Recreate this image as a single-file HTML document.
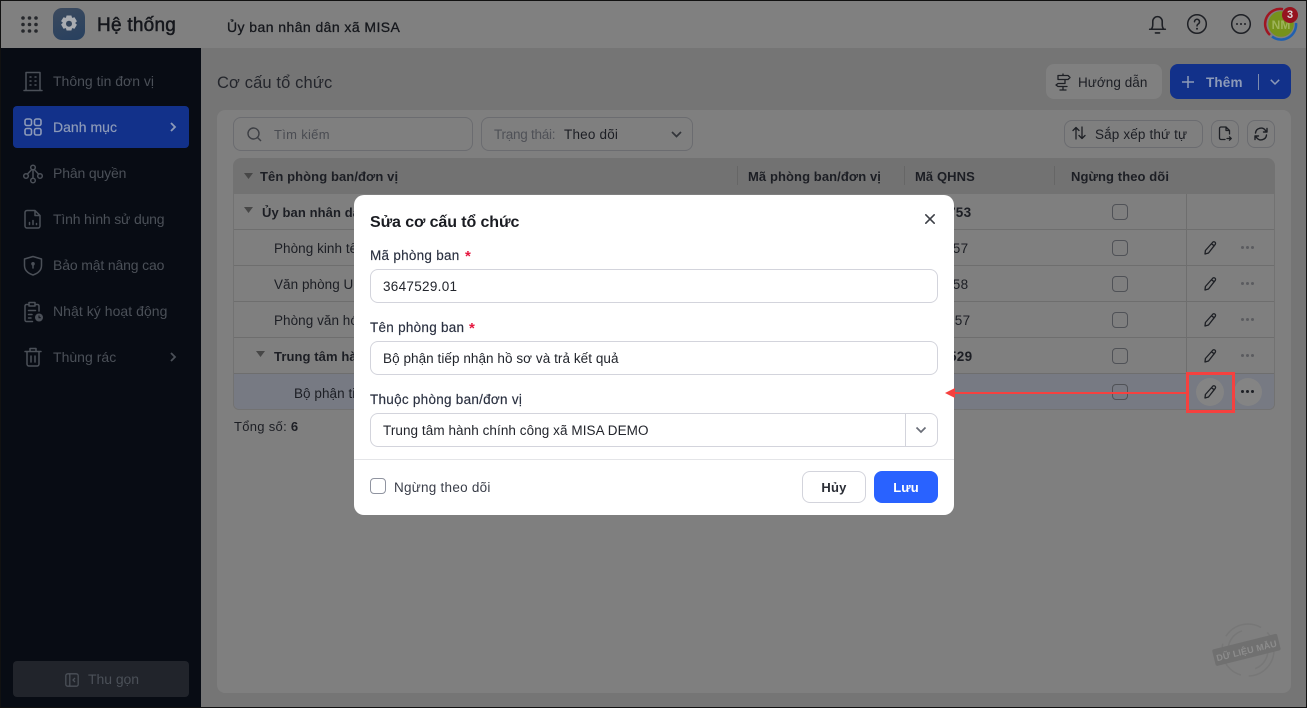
<!DOCTYPE html>
<html><head><meta charset="utf-8"><style>
*{box-sizing:border-box}
html,body{margin:0;padding:0}
body{width:1307px;height:708px;overflow:hidden;position:relative;background:#757575;font-family:"Liberation Sans","Noto Sans CJK SC",sans-serif;color:#1c1e24}
.a{position:absolute}
.t{position:absolute;white-space:nowrap;font-size:13.5px;line-height:18px;letter-spacing:.25px;transform:translateY(1px)}
.b{font-weight:700}
.side{color:#4b5058;font-size:14px;letter-spacing:0;transform:translateY(-1px)}
.box{position:absolute;border:1px solid #6b6c70;border-radius:8px}
.line{position:absolute;background:#6e6e6e}
.cb{position:absolute;width:16px;height:16px;border:1.5px solid #505257;border-radius:4px}
svg{position:absolute;overflow:visible}
.dark{fill:none;stroke:#1e2025;stroke-width:1.5;stroke-linecap:round;stroke-linejoin:round}
.sic{fill:none;stroke:#4b5058;stroke-width:1.5;stroke-linecap:round;stroke-linejoin:round}
.inp{position:absolute;left:16px;width:568px;height:34px;border:1px solid #d3d4dc;border-radius:8px;background:#fff}
.lab{position:absolute;left:16px;white-space:nowrap;font-size:13.5px;line-height:18px;letter-spacing:.27px;color:#2a3040;transform:translateY(1px);-webkit-text-stroke:.15px #2a3040}
.val{position:absolute;left:29px;white-space:nowrap;font-size:13.5px;line-height:18px;letter-spacing:.06px;color:#22252c;transform:translateY(1px)}
.th{font-size:13px;letter-spacing:.09px}
.dots i{position:absolute;top:0;width:3px;height:3px;border-radius:50%;background:#5b5c60}
</style></head><body>

<!-- header -->
<div class="a" style="left:0;top:0;width:1307px;height:48px;background:#808080"></div>
<svg style="left:21px;top:16px" width="17" height="17" fill="#26282c"><circle cx="2" cy="2" r="1.8"/><circle cx="8.5" cy="2" r="1.8"/><circle cx="15" cy="2" r="1.8"/><circle cx="2" cy="8.5" r="1.8"/><circle cx="8.5" cy="8.5" r="1.8"/><circle cx="15" cy="8.5" r="1.8"/><circle cx="2" cy="15" r="1.8"/><circle cx="8.5" cy="15" r="1.8"/><circle cx="15" cy="15" r="1.8"/></svg>
<div class="a" style="left:53px;top:8px;width:32px;height:32px;border-radius:9px;background:linear-gradient(160deg,#3c4a5e,#27405f)"></div>
<svg style="left:59px;top:14px" width="20" height="20" viewBox="0 0 20 20"><path d="M7.6 1.5h4.8l.7 2.4 2.4-.7 2.4 4.1-1.8 1.7 1.8 1.7-2.4 4.1-2.4-.7-.7 2.4H7.6l-.7-2.4-2.4.7L2.1 10.5 3.9 8.8 2.1 7.1l2.4-3.9 2.4.7z" fill="#a9acb1"/><circle cx="10" cy="9.8" r="3" fill="#33445a"/></svg>
<div class="t" style="left:97px;top:12px;font-size:19px;line-height:25px;letter-spacing:.25px;color:#15171c;-webkit-text-stroke:.5px #15171c">Hệ thống</div>
<div class="t" style="left:227px;top:17px;font-size:14px;letter-spacing:.43px;color:#15171c;-webkit-text-stroke:.3px #15171c">Ủy ban nhân dân xã MISA</div>

<svg style="left:1147px;top:14px" width="21" height="21" viewBox="0 0 20 20"><path class="dark" d="M4 14.5c1.2-1.2 1.5-2.2 1.5-4.5V7a4.500 4.500 0 0 1 9 0v3c0 2.300.3 3.300 1.500 4.500zM2.500 14.500h15M8 18h4"/></svg>
<svg style="left:1187px;top:14px" width="20" height="20" viewBox="0 0 20 20"><circle class="dark" cx="10" cy="10" r="9.300"/><path class="dark" d="M7.500 7.800a2.500 2.500 0 1 1 3.800 2.100c-.9.600-1.300 1-1.300 2"/><circle cx="10" cy="14.800" r="1" fill="#1e2025"/></svg>
<svg style="left:1231px;top:14px" width="20" height="20" viewBox="0 0 20 20"><circle class="dark" cx="10" cy="10" r="9.300"/><circle cx="6" cy="10" r="1" fill="#1e2025"/><circle cx="10" cy="10" r="1" fill="#1e2025"/><circle cx="14" cy="10" r="1" fill="#1e2025"/></svg>
<svg style="left:1265px;top:8px" width="32" height="32" viewBox="0 0 32 32"><circle cx="16" cy="16" r="12.800" fill="#76921c"/><path d="M5 27A15 15 0 0 1 18 1.200" fill="none" stroke="#a01622" stroke-width="2.500"/><path d="M7 28.500A15 15 0 0 0 31 15" fill="none" stroke="#2060b0" stroke-width="2.500"/><text x="16" y="21" text-anchor="middle" font-family="Liberation Sans" font-weight="700" font-size="12" fill="#9eb35a">NM</text></svg>
<div class="a" style="left:1282px;top:7px;width:16px;height:16px;border-radius:50%;background:#96141f;color:#d9d9d9;font-size:11px;font-weight:700;line-height:16px;text-align:center">3</div>

<!-- sidebar -->
<div class="a" style="left:0;top:48px;width:201px;height:660px;background:#080c14"></div>
<div class="a" style="left:13px;top:106px;width:176px;height:42px;border-radius:4px;background:#12318a"></div>

<svg style="left:23px;top:71px" width="20" height="20" viewBox="0 0 20 20"><path class="sic" d="M3 19V1.500h14V19M1 19.500h18M7 6h1M12 6h1M7 10h1M12 10h1M7 14h1M12 14h1"/></svg>
<div class="t side" style="left:53px;top:73px">Thông tin đơn vị</div>

<svg style="left:24px;top:118px" width="18" height="18" viewBox="0 0 18 18" fill="none" stroke="#8d9ab8" stroke-width="1.600"><rect x="1" y="1" width="6.500" height="6.500" rx="1.800"/><rect x="10.500" y="1" width="6.500" height="6.500" rx="1.800"/><rect x="1" y="10.500" width="6.500" height="6.500" rx="1.800"/><rect x="10.500" y="10.500" width="6.500" height="6.500" rx="1.800"/></svg>
<div class="t side" style="left:53px;top:119px;color:#8d9ab8;letter-spacing:.02px;-webkit-text-stroke:.2px #8d9ab8">Danh mục</div>
<svg style="left:169px;top:122px" width="8" height="10" viewBox="0 0 8 10"><path d="M2 1l4 4-4 4" fill="none" stroke="#8d9ab8" stroke-width="1.800"/></svg>

<svg style="left:23px;top:164px" width="20" height="20" viewBox="0 0 20 20"><circle class="sic" cx="10" cy="3.500" r="2.300"/><circle class="sic" cx="3" cy="12" r="2.300"/><circle class="sic" cx="17" cy="12" r="2.300"/><circle class="sic" cx="10" cy="16.500" r="2.300"/><path class="sic" d="M8.800 5.500L4.500 10M11.200 5.500L15.500 10M10 6v8"/></svg>
<div class="t side" style="left:53px;top:165px;letter-spacing:-.15px">Phân quyền</div>

<svg style="left:24px;top:209px" width="18" height="20" viewBox="0 0 18 20"><path class="sic" d="M3 1.500h8l5 5V17a2 2 0 0 1-2 2H3a2 2 0 0 1-2-2V3.500a2 2 0 0 1 2-2zM11 1.500V6.500h5M5.500 15.500v-2M9 15.500v-4M12.500 15.500v-1"/></svg>
<div class="t side" style="left:53px;top:211px;letter-spacing:-.18px">Tình hình sử dụng</div>

<svg style="left:23px;top:255px" width="20" height="21" viewBox="0 0 20 21"><path class="sic" d="M10 1.500l8.500 2.500v6.500c0 4.500-3.500 7.800-8.500 9.500-5-1.700-8.500-5-8.500-9.500V4z"/><circle cx="10" cy="8.800" r="1.800" fill="#4b5058"/><path class="sic" d="M10 10v3"/></svg>
<div class="t side" style="left:53px;top:257px;letter-spacing:-.15px">Bảo mật nâng cao</div>

<svg style="left:24px;top:301px" width="20" height="22" viewBox="0 0 20 22"><path class="sic" d="M4 3.500H2.500a1.500 1.500 0 0 0-1.500 1.500v14a1.500 1.500 0 0 0 1.500 1.500h6M12 3.500h1.500A1.500 1.500 0 0 1 15 5v5M5 1.500h6v3.500H5zM4.500 9.500h7M4.500 13.500h3.500M4.500 17h2.500"/><circle cx="15" cy="16.500" r="4" fill="#4b5058"/><path d="M15 14.500v2.200h1.800" fill="none" stroke="#080c14" stroke-width="1"/></svg>
<div class="t side" style="left:53px;top:303px;letter-spacing:.05px">Nhật ký hoạt động</div>

<svg style="left:24px;top:347px" width="18" height="20" viewBox="0 0 18 20"><path class="sic" d="M1 4.500h16M3 4.500V17a2 2 0 0 0 2 2h8a2 2 0 0 0 2-2V4.500M6 4.500V1.500h6v3M7 9v6M11 9v6"/></svg>
<div class="t side" style="left:53px;top:349px;letter-spacing:.02px">Thùng rác</div>
<svg style="left:169px;top:352px" width="8" height="10" viewBox="0 0 8 10"><path d="M2 1l4 4-4 4" fill="none" stroke="#4b5058" stroke-width="1.800"/></svg>

<div class="a" style="left:13px;top:661px;width:176px;height:36px;border-radius:4px;background:#21242b"></div>
<svg style="left:65px;top:673px" width="14" height="14" viewBox="0 0 14 14" fill="none" stroke="#4b5058" stroke-width="1.300"><rect x=".8" y=".8" width="12.400" height="12.400" rx="2"/><path d="M4.800 1v12M10 5L8 7l2 2"/></svg>
<div class="t side" style="left:88px;top:671px;letter-spacing:-.05px">Thu gọn</div>

<!-- content -->
<div class="t" style="left:217px;top:72px;font-size:16.500px;line-height:21px;letter-spacing:.13px;color:#24262c">Cơ cấu tổ chức</div>

<div class="a" style="left:1046px;top:64px;width:116px;height:35px;border-radius:8px;background:#808080"></div>
<svg style="left:1055px;top:73px" width="16" height="18" viewBox="0 0 16 18"><path class="dark" style="stroke-width:1.300" d="M3 2.500h10l2 2-2 2H3zM10 7v3.500H3l-2 1.500 2 1.500h9M8 1v1.500M8 13.500V17M5 17h6"/></svg>
<div class="t" style="left:1078px;top:73px;font-size:13.500px;letter-spacing:.05px">Hướng dẫn</div>

<div class="a" style="left:1170px;top:64px;width:121px;height:35px;border-radius:8px;background:#12318a"></div>
<svg style="left:1182px;top:76px" width="12" height="12" viewBox="0 0 12 12"><path d="M6 0v12M0 6h12" stroke="#8d9ab8" stroke-width="1.500"/></svg>
<div class="t b" style="left:1206px;top:73px;font-size:13.500px;letter-spacing:.15px;color:#8d9ab8">Thêm</div>
<div class="a" style="left:1258px;top:74px;width:1px;height:16px;background:#7d8bae"></div>
<svg style="left:1270px;top:79px" width="10" height="6" viewBox="0 0 10 6"><path d="M.8.800L5 5 9.200.800" fill="none" stroke="#8d9ab8" stroke-width="1.500"/></svg>

<div class="a" style="left:217px;top:110px;width:1074px;height:583px;border-radius:8px;background:#7f7f7f"></div>

<div class="box" style="left:233px;top:117px;width:240px;height:34px"></div>
<svg style="left:247px;top:127px" width="15" height="15" viewBox="0 0 15 15"><circle cx="6.500" cy="6.500" r="5.500" fill="none" stroke="#3d3f44" stroke-width="1.400"/><path d="M10.500 10.500l3.500 3.500" stroke="#3d3f44" stroke-width="1.400"/></svg>
<div class="t" style="left:274px;top:125px;color:#4a4c52;letter-spacing:.3px;font-size:13px">Tìm kiếm</div>

<div class="box" style="left:481px;top:117px;width:212px;height:34px"></div>
<div class="t" style="left:494px;top:125px;color:#4f5157;letter-spacing:-.25px">Trạng thái:</div>
<div class="t" style="left:564px;top:125px;letter-spacing:.2px">Theo dõi</div>
<svg style="left:671px;top:131px" width="11" height="7" viewBox="0 0 11 7"><path d="M1 1l4.500 4.500L10 1" fill="none" stroke="#33353a" stroke-width="1.700"/></svg>

<div class="box" style="left:1064px;top:120px;width:139px;height:28px"></div>
<svg style="left:1072px;top:126px" width="14" height="14" viewBox="0 0 14 14"><path class="dark" d="M4 13V1.500M1 4.500l3-3 3 3M10 1v11.500M7 9.500l3 3 3-3" style="stroke-width:1.300"/></svg>
<div class="t" style="left:1095px;top:125px;letter-spacing:.15px">Sắp xếp thứ tự</div>
<div class="box" style="left:1211px;top:120px;width:28px;height:28px"></div>
<svg style="left:1218px;top:126px" width="14" height="15" viewBox="0 0 14 15"><path class="dark" d="M7 13.500H3a1.500 1.500 0 0 1-1.500-1.500V2.500A1.500 1.500 0 0 1 3 1h5l3.500 3.500V8M8 1v3.500h3.500M9 12.500h4M11.500 10.800l1.700 1.700-1.700 1.700" style="stroke-width:1.300"/></svg>
<div class="box" style="left:1247px;top:120px;width:28px;height:28px"></div>
<svg style="left:1254px;top:127px" width="14" height="14" viewBox="0 0 14 14"><path class="dark" d="M1.500 6A5.500 5.500 0 0 1 11.500 3.500L13 5M12.500 8A5.500 5.500 0 0 1 2.500 10.500L1 9M13 1.500V5H9.500M1 12.500V9h3.500" style="stroke-width:1.400"/></svg>

<!-- table -->
<div class="a" style="left:233px;top:158px;width:1042px;height:36px;border-radius:8px 8px 0 0;background:#727272"></div>
<div class="a" style="left:233px;top:194px;width:1042px;height:216px;border:1px solid #727272;border-top:0;border-radius:0 0 6px 6px;background:#7f7f7f"></div>
<div class="a" style="left:234px;top:374px;width:1040px;height:35px;background:#777a83;border-radius:0 0 5px 5px"></div>
<div class="line" style="left:234px;top:229px;width:1040px;height:1px"></div>
<div class="line" style="left:234px;top:265px;width:1040px;height:1px"></div>
<div class="line" style="left:234px;top:301px;width:1040px;height:1px"></div>
<div class="line" style="left:234px;top:337px;width:1040px;height:1px"></div>
<div class="line" style="left:234px;top:373px;width:1040px;height:1px"></div>
<div class="line" style="left:1186px;top:194px;width:1px;height:180px"></div>
<div class="line" style="left:737px;top:166px;width:1px;height:19px;background:#666"></div>
<div class="line" style="left:904px;top:166px;width:1px;height:19px;background:#666"></div>
<div class="line" style="left:1054px;top:166px;width:1px;height:19px;background:#666"></div>

<svg style="left:244px;top:173px" width="9" height="6"><path d="M0 0h9L4.500 6z" fill="#474747"/></svg>
<div class="t b th" style="left:260px;top:167px">Tên phòng ban/đơn vị</div>
<div class="t b th" style="left:748px;top:167px">Mã phòng ban/đơn vị</div>
<div class="t b th" style="left:915px;top:167px">Mã QHNS</div>
<div class="t b th" style="left:1071px;top:167px">Ngừng theo dõi</div>

<svg style="left:244px;top:207px" width="9" height="6"><path d="M0 0h9L4.500 6z" fill="#474747"/></svg>
<div class="t b th" style="left:262px;top:203px">Ủy ban nhân dân</div>
<div class="t" style="left:274px;top:239px;letter-spacing:.05px">Phòng kinh tế</div>
<div class="t" style="left:274px;top:275px;letter-spacing:.05px">Văn phòng UBND</div>
<div class="t" style="left:274px;top:311px;letter-spacing:.05px">Phòng văn hóa</div>
<svg style="left:256px;top:351px" width="9" height="6"><path d="M0 0h9L4.500 6z" fill="#474747"/></svg>
<div class="t b th" style="left:274px;top:347px">Trung tâm hành</div>
<div class="t" style="left:294px;top:384px;letter-spacing:.05px">Bộ phận tiếp</div>

<div class="t b" style="left:948px;top:203px;letter-spacing:.3px">753</div>
<div class="t" style="left:945px;top:239px;letter-spacing:.3px">757</div>
<div class="t" style="left:945px;top:275px;letter-spacing:.3px">758</div>
<div class="t" style="left:947px;top:311px;letter-spacing:.3px">757</div>
<div class="t b" style="left:949px;top:347px;letter-spacing:.3px">529</div>

<div class="cb" style="left:1112px;top:204px"></div>
<div class="cb" style="left:1112px;top:240px"></div>
<div class="cb" style="left:1112px;top:276px"></div>
<div class="cb" style="left:1112px;top:312px"></div>
<div class="cb" style="left:1112px;top:348px"></div>
<div class="cb" style="left:1112px;top:384px"></div>

<svg style="left:1203px;top:241px" width="14" height="14" viewBox="0 0 14 14"><path class="dark" style="stroke-width:1.300" d="M9.500 1.500a1.600 1.600 0 0 1 2.800 1.800L5.500 12 2 13l.4-3.500zM8.500 2.800l2.800 2"/></svg>
<svg style="left:1203px;top:277px" width="14" height="14" viewBox="0 0 14 14"><path class="dark" style="stroke-width:1.300" d="M9.500 1.500a1.600 1.600 0 0 1 2.800 1.800L5.500 12 2 13l.4-3.500zM8.500 2.800l2.800 2"/></svg>
<svg style="left:1203px;top:313px" width="14" height="14" viewBox="0 0 14 14"><path class="dark" style="stroke-width:1.300" d="M9.500 1.500a1.600 1.600 0 0 1 2.800 1.800L5.500 12 2 13l.4-3.500zM8.500 2.800l2.800 2"/></svg>
<svg style="left:1203px;top:349px" width="14" height="14" viewBox="0 0 14 14"><path class="dark" style="stroke-width:1.300" d="M9.500 1.500a1.600 1.600 0 0 1 2.800 1.800L5.500 12 2 13l.4-3.500zM8.500 2.800l2.800 2"/></svg>
<div class="a dots" style="left:1241px;top:246px"><i style="left:0"></i><i style="left:5px"></i><i style="left:10px"></i></div>
<div class="a dots" style="left:1241px;top:282px"><i style="left:0"></i><i style="left:5px"></i><i style="left:10px"></i></div>
<div class="a dots" style="left:1241px;top:318px"><i style="left:0"></i><i style="left:5px"></i><i style="left:10px"></i></div>
<div class="a dots" style="left:1241px;top:354px"><i style="left:0"></i><i style="left:5px"></i><i style="left:10px"></i></div>

<div class="a" style="left:1196px;top:378px;width:28px;height:28px;border-radius:50%;background:#848484"></div>
<div class="a" style="left:1234px;top:378px;width:28px;height:28px;border-radius:50%;background:#848484"></div>
<svg style="left:1203px;top:385px" width="14" height="14" viewBox="0 0 14 14"><path class="dark" style="stroke-width:1.300" d="M9.500 1.500a1.600 1.600 0 0 1 2.800 1.800L5.500 12 2 13l.4-3.500zM8.500 2.800l2.800 2"/></svg>
<div class="a dots" style="left:1241px;top:390px"><i style="left:0;background:#1e2025"></i><i style="left:5px;background:#1e2025"></i><i style="left:10px;background:#1e2025"></i></div>

<div class="t" style="left:234px;top:417px;font-size:13px;letter-spacing:.3px">Tổng số: <b>6</b></div>

<!-- watermark -->
<svg style="left:1210px;top:617px" width="76" height="66" viewBox="0 0 76 66"><g fill="none" stroke="#777" stroke-width="1.500"><circle cx="38" cy="33" r="26" stroke-dasharray="40 8"/><circle cx="38" cy="33" r="20" stroke-dasharray="24 40"/></g><g transform="rotate(-14 38 33)"><rect x="3" y="24" width="67" height="17" rx="2" fill="#707070"/><text x="36.500" y="36.500" text-anchor="middle" font-family="Liberation Sans" font-size="9" font-weight="700" letter-spacing=".2" fill="#8c8c8c">DỮ LIỆU MẪU</text></g></svg>

<!-- modal -->
<div class="a" style="left:354px;top:195px;width:600px;height:320px;background:#fff;border-radius:10px">
  <div class="t" style="left:16px;top:16px;font-size:16px;line-height:21px;font-weight:700;letter-spacing:-.1px;color:#1a1c22">Sửa cơ cấu tổ chức</div>
  <svg style="left:571px;top:19px" width="10" height="10" viewBox="0 0 10 10"><path d="M.8.800l8.400 8.400M9.200.800L.8 9.200" stroke="#3c3f46" stroke-width="1.600" stroke-linecap="round"/></svg>

  <div class="lab" style="top:51px">Mã phòng ban</div>
  <div class="t" style="left:111px;top:52px;color:#e5173f;font-size:15px;font-weight:700">*</div>
  <div class="inp" style="top:74px"></div>
  <div class="val" style="top:82px;letter-spacing:.3px">3647529.01</div>

  <div class="lab" style="top:123px">Tên phòng ban</div>
  <div class="t" style="left:115px;top:124px;color:#e5173f;font-size:15px;font-weight:700">*</div>
  <div class="inp" style="top:146px"></div>
  <div class="val" style="top:154px">Bộ phận tiếp nhận hồ sơ và trả kết quả</div>

  <div class="lab" style="top:195px">Thuộc phòng ban/đơn vị</div>
  <div class="inp" style="top:218px"></div>
  <div class="a" style="left:551px;top:219px;width:1px;height:32px;background:#d3d4dc"></div>
  <svg style="left:561px;top:231px" width="12" height="8" viewBox="0 0 12 8"><path d="M1.500 1.500L6 6l4.500-4.500" fill="none" stroke="#6a6e78" stroke-width="1.700"/></svg>
  <div class="val" style="top:226px;letter-spacing:.07px">Trung tâm hành chính công xã MISA DEMO</div>

  <div class="a" style="left:0;top:264px;width:600px;height:1px;background:#e4e5e8"></div>

  <div class="a" style="left:16px;top:283px;width:16px;height:16px;border:1.500px solid #9094a0;border-radius:4px"></div>
  <div class="lab" style="left:40px;top:283px;color:#3a3e49;letter-spacing:.25px;-webkit-text-stroke:0">Ngừng theo dõi</div>

  <div class="a" style="left:448px;top:276px;width:64px;height:32px;border:1px solid #d3d4dc;border-radius:8px;text-align:center;font-size:13px;line-height:31px;font-weight:700;letter-spacing:.2px;color:#2a2d35">Hủy</div>
  <div class="a" style="left:520px;top:276px;width:64px;height:32px;border-radius:8px;background:#2962ff;text-align:center;font-size:13px;line-height:33px;font-weight:700;letter-spacing:.1px;color:#fff">Lưu</div>
</div>

<!-- red annotation -->
<div class="a" style="left:1186px;top:372px;width:49px;height:41px;border:3px solid #f5413f"></div>
<div class="a" style="left:952px;top:392px;width:234px;height:2px;background:#f5413f"></div>
<svg style="left:945px;top:388px" width="10" height="10"><path d="M0 5L10 0v10z" fill="#f5413f"/></svg>

<!-- screenshot frame -->
<div class="a" style="left:0;top:0;width:1307px;height:708px;border:1px solid #111;pointer-events:none"></div>
</body></html>
